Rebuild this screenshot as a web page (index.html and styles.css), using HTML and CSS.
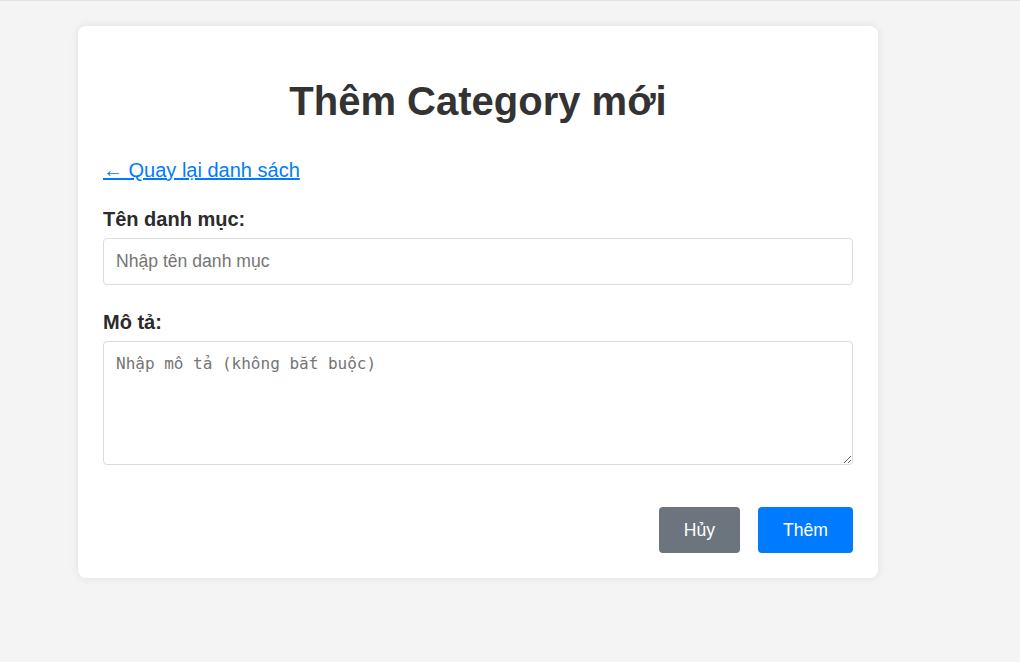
FILE: index.html
```html
<!DOCTYPE html>
<html lang="vi">
<head>
<meta charset="utf-8">
<title>Thêm Category mới</title>
<link rel="stylesheet" href="styles.css">
</head>
<body>
  <div class="card">
    <h1 class="title">Thêm Category mới</h1>
    <div class="back-row"><a class="back-link" href="#">← Quay lại danh sách</a></div>
    <form class="form">
      <div class="group">
        <label class="label" for="name">Tên danh mục:</label>
        <input class="input" id="name" type="text" placeholder="Nhập tên danh mục">
      </div>
      <div class="group">
        <label class="label" for="desc">Mô tả:</label>
        <textarea class="textarea" id="desc" placeholder="Nhập mô tả (không bắt buộc)"></textarea>
      </div>
      <div class="actions">
        <button type="button" class="btn btn-cancel">Hủy</button>
        <button type="submit" class="btn btn-primary">Thêm</button>
      </div>
    </form>
  </div>
</body>
</html>
```

FILE: styles.css
```css
html, body {
  margin: 0;
  padding: 0;
}
body {
  background: #f4f4f5;
  border-top: 1px solid #dfe1ea;
  font-family: "Liberation Sans", Arial, sans-serif;
  color: #333;
  min-height: 661px;
  box-sizing: border-box;
}
.card {
  width: 800px;
  box-sizing: border-box;
  margin: 25px 0 0 78px;
  padding: 25px;
  background: #fff;
  border-radius: 8px;
  box-shadow: 0 0 10px rgba(0, 0, 0, 0.09);
}
.title {
  margin: 27px 0 35px;
  font-size: 40px;
  line-height: 46px;
  font-weight: bold;
  text-align: center;
  color: #333;
}
.back-row {
  margin-bottom: 26px;
  font-size: 20px;
  line-height: 23px;
}
.back-link {
  color: #007bff;
  text-decoration: underline;
}
.form {
  margin: 0;
}
.group {
  margin-bottom: 26px;
}
.label {
  display: block;
  font-size: 20px;
  line-height: 23px;
  font-weight: bold;
  color: #2b2b2b;
  margin-bottom: 7px;
}
.input {
  display: block;
  width: 100%;
  height: 47px;
  box-sizing: border-box;
  padding: 0 12px;
  border: 1px solid #dcdcdc;
  border-radius: 4px;
  font-family: "Liberation Sans", Arial, sans-serif;
  font-size: 17.6px;
  color: #333;
  outline: none;
}
.input::placeholder {
  color: #757575;
}
.textarea {
  display: block;
  width: 100%;
  height: 124px;
  box-sizing: border-box;
  padding: 12px;
  border: 1px solid #dcdcdc;
  border-radius: 4px;
  font-family: "DejaVu Sans Mono", monospace;
  font-size: 16px;
  color: #333;
  outline: none;
  resize: vertical;
  margin: 0;
}
.textarea::placeholder {
  color: #757575;
}
.actions {
  display: flex;
  justify-content: flex-end;
  gap: 18px;
  margin-top: 42px;
}
.btn {
  border: none;
  border-radius: 4px;
  padding: 13px 25px;
  font-family: "Liberation Sans", Arial, sans-serif;
  font-size: 17.6px;
  line-height: 20px;
  color: #fff;
  cursor: pointer;
}
.btn-cancel {
  background: #6c757d;
}
.btn-primary {
  background: #007bff;
}
```
